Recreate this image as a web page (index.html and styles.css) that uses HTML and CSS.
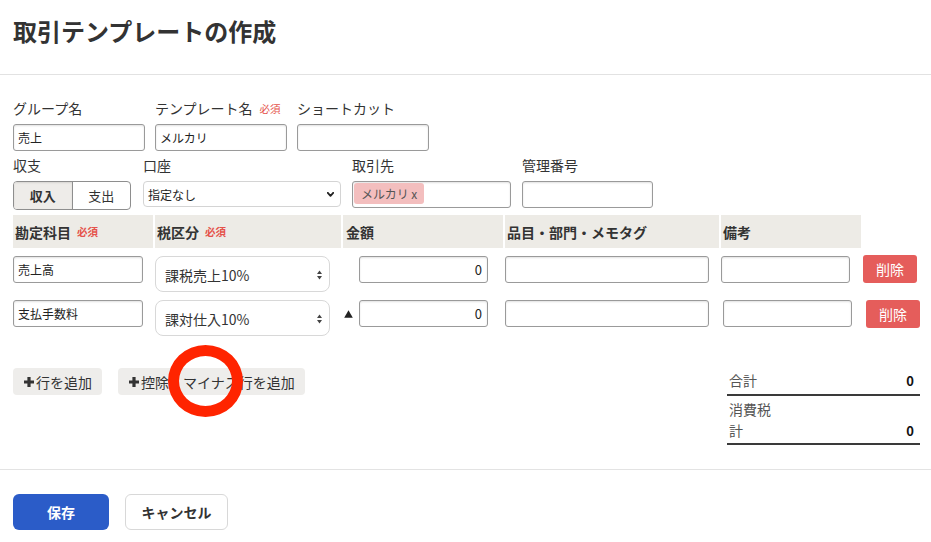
FILE: index.html
```html
<!DOCTYPE html>
<html lang="ja">
<head>
<meta charset="utf-8">
<title>取引テンプレートの作成</title>
<link rel="stylesheet" href="styles.css">
</head>
<body>
<header class="page-header">
  <h1 class="page-title">取引テンプレートの作成</h1>
</header>

<main class="form">
  <div class="field-row row-top">
    <div class="field">
      <label class="field-label">グループ名</label>
      <input class="text-input w132" type="text" value="売上">
    </div>
    <div class="field">
      <label class="field-label">テンプレート名<span class="required">必須</span></label>
      <input class="text-input w132" type="text" value="メルカリ">
    </div>
    <div class="field">
      <label class="field-label">ショートカット</label>
      <input class="text-input w132" type="text" value="">
    </div>
  </div>

  <div class="field-row row-second">
    <div class="field f-type">
      <label class="field-label">収支</label>
      <div class="segmented">
        <span class="seg active">収入</span>
        <span class="seg">支出</span>
      </div>
    </div>
    <div class="field">
      <label class="field-label">口座</label>
      <div class="select-box">
        <span>指定なし</span>
        <svg class="chevron" width="7" height="5" viewBox="0 0 7 5"><path d="M0.8 0.8 L3.5 3.8 L6.2 0.8" fill="none" stroke="#222" stroke-width="1.8" stroke-linecap="round" stroke-linejoin="round"/></svg>
      </div>
    </div>
    <div class="field">
      <label class="field-label">取引先</label>
      <div class="tag-input"><span class="tag">メルカリ&nbsp;x</span></div>
    </div>
    <div class="field">
      <label class="field-label">管理番号</label>
      <input class="text-input w131" type="text" value="">
    </div>
  </div>

  <div class="entry-table">
    <div class="entry-grid entry-head">
      <div class="th">勘定科目<span class="required">必須</span></div>
      <div class="th">税区分<span class="required">必須</span></div>
      <div class="th th-pad">金額</div>
      <div class="th">品目・部門・メモタグ</div>
      <div class="th">備考</div>
      <div></div>
    </div>

    <div class="entry-grid entry-row">
      <div><input class="text-input w130" type="text" value="売上高"></div>
      <div>
        <div class="tax-select"><span>課税売上10%</span>
          <svg width="5" height="10" viewBox="0 0 5 10"><path d="M0 4 L2.5 0.5 L5 4 Z M0 6 L2.5 9.5 L5 6 Z" fill="#444"/></svg>
        </div>
      </div>
      <div class="td-amount"><span class="mark-slot"></span><input class="text-input amount" type="text" value="0"></div>
      <div><input class="text-input w204" type="text" value=""></div>
      <div><input class="text-input w129" type="text" value=""></div>
      <div><button class="btn-delete" type="button">削除</button></div>
    </div>

    <div class="entry-grid entry-row">
      <div><input class="text-input w130" type="text" value="支払手数料"></div>
      <div>
        <div class="tax-select"><span>課対仕入10%</span>
          <svg width="5" height="10" viewBox="0 0 5 10"><path d="M0 4 L2.5 0.5 L5 4 Z M0 6 L2.5 9.5 L5 6 Z" fill="#444"/></svg>
        </div>
      </div>
      <div class="td-amount"><span class="mark-slot"><svg width="9" height="8" viewBox="0 0 9 8"><path d="M4.5 0.3 L8.8 7.7 L0.2 7.7 Z" fill="#222"/></svg></span><input class="text-input amount" type="text" value="0"></div>
      <div><input class="text-input w204" type="text" value=""></div>
      <div><input class="text-input w129 memo-shift" type="text" value=""></div>
      <div><button class="btn-delete delete-shift" type="button">削除</button></div>
    </div>
  </div>

  <div class="footer-area">
    <div class="actions">
      <button class="btn-add" type="button"><svg width="10" height="10" viewBox="0 0 10 10"><path d="M3.4 0h3.2v3.4H10v3.2H6.6V10H3.4V6.6H0V3.4h3.4z" fill="#333"/></svg>行を追加</button>
      <button class="btn-add" type="button"><svg width="10" height="10" viewBox="0 0 10 10"><path d="M3.4 0h3.2v3.4H10v3.2H6.6V10H3.4V6.6H0V3.4h3.4z" fill="#333"/></svg>控除・マイナス行を追加</button>
    </div>
    <table class="totals">
      <tr class="tot-first"><td class="tot-label">合計</td><td class="tot-value">0</td></tr>
      <tr class="tot-second"><td class="tot-label">消費税計</td><td class="tot-value">0</td></tr>
    </table>
  </div>
</main>

<footer class="page-footer">
  <button class="btn-save" type="button">保存</button>
  <button class="btn-cancel" type="button">キャンセル</button>
</footer>

<div class="annotation-circle"></div>
</body>
</html>
```

FILE: styles.css
```css
* { box-sizing: border-box; }

body {
  margin: 0;
  width: 931px;
  height: 542px;
  overflow: hidden;
  position: relative;
  background: #fff;
  color: #333;
  font-family: "Noto Sans CJK JP", "Noto Sans", sans-serif;
}

input, button {
  font-family: "Noto Sans CJK JP", "Noto Sans", sans-serif;
}

.page-header {
  height: 75px;
  padding: 16px 13px 0;
  border-bottom: 1px solid #e2e2e2;
}

.page-title {
  margin: 0;
  font-size: 24px;
  line-height: 30px;
  font-weight: 700;
  color: #333;
}

.form {
  padding: 23px 11px 0 13px;
}

.field-row {
  display: flex;
  align-items: flex-start;
}

.row-top { gap: 10px; }

.row-second {
  gap: 11px;
  margin-top: 4px;
}

.field {
  display: flex;
  flex-direction: column;
  gap: 5px;
}

.f-type { width: 119px; }

.field-label {
  display: flex;
  align-items: center;
  gap: 7px;
  font-size: 14px;
  line-height: 21px;
  color: #333;
}

.required {
  font-size: 10.5px;
  color: #e5534b;
}

.text-input {
  height: 27px;
  padding: 0 4px;
  border: 1px solid #9a9a9a;
  border-radius: 3px;
  background: #fff;
  box-shadow: inset 0 1px 2px rgba(0, 0, 0, 0.12);
  font-size: 12px;
  color: #222;
  outline: none;
}

.w132 { width: 132px; }
.w131 { width: 131px; }
.w130 { width: 130px; }
.w129 { width: 129px; }
.w204 { width: 204px; }

.segmented {
  display: flex;
  width: 118px;
  height: 29px;
  border: 1px solid #8e8e8e;
  border-radius: 4px;
  overflow: hidden;
}

.seg {
  flex: 1;
  display: flex;
  align-items: center;
  justify-content: center;
  font-size: 13px;
  color: #333;
}

.seg.active {
  background: #eeece9;
  font-weight: 700;
  border-right: 1px solid #8e8e8e;
  box-shadow: inset 0 1px 2px rgba(0, 0, 0, 0.1);
}

.select-box {
  width: 198px;
  height: 26px;
  display: flex;
  align-items: center;
  justify-content: space-between;
  padding: 0 6px 0 4px;
  border: 1px solid #d4d4d4;
  border-radius: 4px;
  font-size: 12px;
  color: #222;
}

.tag-input {
  width: 159px;
  height: 27px;
  display: flex;
  align-items: flex-start;
  padding: 1px 1px 0;
  border: 1px solid #9a9a9a;
  border-radius: 3px;
  box-shadow: inset 0 1px 2px rgba(0, 0, 0, 0.12);
}

.tag {
  height: 21px;
  line-height: 21px;
  padding: 0 7px;
  background: #f3bebe;
  border-radius: 3px;
  font-size: 12px;
  color: #555;
}

.entry-table { margin-top: 5px; }

.entry-grid {
  display: grid;
  grid-template-columns: 140px 186px 160px 214px 140px 1fr;
  column-gap: 2px;
}

.th {
  height: 33px;
  display: flex;
  align-items: center;
  gap: 6px;
  padding-left: 2px;
  background: #edebe6;
  font-size: 14px;
  font-weight: 700;
  color: #333;
}

.th-pad { padding-left: 3px; }

.th .required { font-weight: 700; }

.entry-row {
  margin-top: 8px;
  align-items: start;
}

.tax-select {
  width: 175px;
  height: 36px;
  display: flex;
  align-items: center;
  justify-content: space-between;
  padding: 1px 7px 0 9px;
  border: 1px solid #d8d8d8;
  border-radius: 8px;
  font-size: 14px;
  color: #333;
}

.td-amount {
  display: flex;
  align-items: center;
}

.mark-slot {
  width: 16px;
  height: 27px;
  display: flex;
  align-items: center;
  padding-left: 1px;
}

.amount {
  width: 129px;
  text-align: right;
  padding-right: 5px;
  font-size: 13px;
}

.btn-delete {
  width: 54px;
  height: 28px;
  margin-top: -3px;
  border: 0;
  border-radius: 3px;
  background: #e55d5b;
  color: #fff;
  font-size: 14px;
}

.delete-shift {
  margin-top: 0;
  margin-left: 3px;
}

.memo-shift { margin-left: 2px; }

.footer-area {
  display: flex;
  justify-content: space-between;
  align-items: flex-start;
  margin-top: 32px;
}

.actions {
  display: flex;
  gap: 16px;
}

.btn-add {
  height: 27px;
  display: flex;
  align-items: center;
  gap: 2px;
  padding: 0 10px 0 11px;
  border: 0;
  border-radius: 4px;
  background: #eeedeb;
  font-size: 14px;
  color: #333;
}

.totals {
  width: 193px;
  border-collapse: collapse;
  font-size: 14px;
}

.totals td {
  line-height: 21px;
  padding: 0;
}

.totals tr { border-bottom: 2px solid #3a3a3a; }

.tot-first td { padding-top: 2px; padding-bottom: 3px; }
.tot-second td { padding-top: 3px; padding-bottom: 2px; }

.tot-label {
  width: 48px;
  padding-left: 2px !important;
  color: #555;
}

.tot-value {
  text-align: right;
  vertical-align: bottom;
  padding-right: 6px !important;
  font-size: 13px;
  font-weight: 700;
  color: #111;
}

.page-footer {
  display: flex;
  gap: 16px;
  margin-top: 24px;
  padding: 24px 13px 0;
  border-top: 1px solid #e3e3e3;
}

.btn-save {
  width: 96px;
  height: 36px;
  border: 0;
  border-radius: 6px;
  background: #2b5cc8;
  color: #fff;
  font-size: 14px;
  font-weight: 700;
}

.btn-cancel {
  width: 103px;
  height: 36px;
  border: 1px solid #d8d8d8;
  border-radius: 6px;
  background: #fff;
  color: #333;
  font-size: 14px;
  font-weight: 700;
}

.annotation-circle {
  position: absolute;
  left: 168px;
  top: 345px;
  width: 75px;
  height: 72px;
  border: 11px solid #ff2400;
  border-radius: 50%;
}
```
